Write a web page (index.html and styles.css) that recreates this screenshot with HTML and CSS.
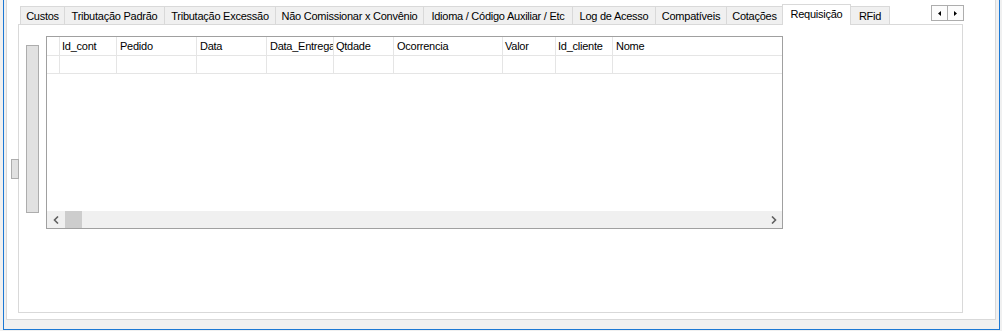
FILE: index.html
```html
<!DOCTYPE html>
<html>
<head>
<meta charset="utf-8">
<link rel="stylesheet" href="styles.css">
</head>
<body>
<div class="window">
  <div class="panel">
    <div class="tabctl">
      <div class="tabstrip">
        <div class="tab w-custos">Custos</div>
        <div class="tab w-tpad">Tributação Padrão</div>
        <div class="tab w-texc">Tributação Excessão</div>
        <div class="tab w-nao">Não Comissionar x Convênio</div>
        <div class="tab w-idi">Idioma / Código Auxiliar / Etc</div>
        <div class="tab w-log">Log de Acesso</div>
        <div class="tab w-comp">Compatíveis</div>
        <div class="tab w-cot">Cotações</div>
        <div class="tab sel w-req">Requisição</div>
        <div class="tab last w-rfid">RFid</div>
      </div>
      <div class="tabscroll">
        <div class="sbtn"><svg width="3" height="5" viewBox="0 0 3 5"><path d="M3 0L0 2.5L3 5Z" fill="#000"/></svg></div>
        <div class="sbtn"><svg width="3" height="5" viewBox="0 0 3 5"><path d="M0 0L3 2.5L0 5Z" fill="#000"/></svg></div>
      </div>
      <div class="page">
        <div class="sidebtn"></div>
        <div class="vbar"></div>
        <div class="grid">
          <div class="row head">
            <div class="cell c-sel"></div>
            <div class="cell c-id">Id_cont</div>
            <div class="cell c-ped">Pedido</div>
            <div class="cell c-data">Data</div>
            <div class="cell c-ent">Data_Entrega</div>
            <div class="cell c-qt">Qtdade</div>
            <div class="cell c-oc">Ocorrencia</div>
            <div class="cell c-val">Valor</div>
            <div class="cell c-cli">Id_cliente</div>
            <div class="cell c-nome">Nome</div>
          </div>
          <div class="row data">
            <div class="cell c-sel"></div>
            <div class="cell c-id"></div>
            <div class="cell c-ped"></div>
            <div class="cell c-data"></div>
            <div class="cell c-ent"></div>
            <div class="cell c-qt"></div>
            <div class="cell c-oc"></div>
            <div class="cell c-val"></div>
            <div class="cell c-cli"></div>
            <div class="cell c-nome"></div>
          </div>
          <div class="hscroll">
            <div class="arrow"><svg width="6" height="8" viewBox="0 0 6 8"><path d="M5 0.5L1.5 4L5 7.5" fill="none" stroke="#606060" stroke-width="1.6"/></svg></div>
            <div class="thumb"></div>
            <div class="track"></div>
            <div class="arrow"><svg width="6" height="8" viewBox="0 0 6 8"><path d="M1 0.5L4.5 4L1 7.5" fill="none" stroke="#606060" stroke-width="1.6"/></svg></div>
          </div>
        </div>
      </div>
    </div>
  </div>
</div>
</body>
</html>
```
FILE: styles.css
```css
* { box-sizing: border-box; }
html, body { margin: 0; padding: 0; }
body {
  background: #f0f0f0;
  width: 1002px;
  height: 331px;
  overflow: hidden;
  font-family: "Liberation Sans", Arial, sans-serif;
  font-size: 11px;
  letter-spacing: -0.25px;
  color: #000;
}
.window {
  margin-left: 3px;
  width: 997px;
  height: 330px;
  border: 1px solid #1c78d4;
  border-top: 0;
  padding-left: 2px;
}
.panel {
  width: 990px;
  height: 320px;
  background: #fff;
  border: 1px solid #d9d9d9;
  border-top: 0;
  padding: 4px 0 0 11px;
}
.tabctl {
  position: relative;
  width: 945px;
}
.tabstrip {
  display: flex;
  align-items: flex-end;
  height: 20px;
  padding-left: 2px;
}
.tab {
  height: 18px;
  background: #f0f0f0;
  border-top: 1px solid #d9d9d9;
  border-left: 1px solid #d9d9d9;
  display: flex;
  align-items: center;
  justify-content: center;
  padding-top: 1px;
  white-space: nowrap;
  overflow: hidden;
}
.tab.sel {
  height: 21px;
  margin-bottom: -1px;
  background: #fff;
  border-right: 1px solid #d9d9d9;
  position: relative;
  z-index: 1;
  padding-top: 0;
  padding-bottom: 3px;
}
.tab.last {
  border-left: 0;
  border-right: 1px solid #d9d9d9;
}
.w-custos { width: 44px; }
.w-tpad { width: 100px; }
.w-texc { width: 111px; }
.w-nao { width: 148px; }
.w-idi { width: 149px; }
.w-log { width: 83px; }
.w-comp { width: 71px; }
.w-cot { width: 56px; }
.w-req { width: 69px; }
.w-rfid { width: 39px; }

.tabscroll {
  position: absolute;
  left: 913px;
  top: 1px;
  display: flex;
  z-index: 2;
}
.sbtn {
  width: 17px;
  height: 16px;
  background: #fcfcfc;
  border: 1px solid #adadad;
  display: flex;
  align-items: center;
  justify-content: center;
}
.sbtn + .sbtn { margin-left: -1px; }

.page {
  position: relative;
  height: 289px;
  border: 1px solid #d9d9d9;
  background: #fff;
  display: flex;
  align-items: flex-start;
  gap: 7px;
  padding: 11px 0 0 7px;
}
.sidebtn {
  position: absolute;
  left: -8px;
  top: 134px;
  width: 8px;
  height: 20px;
  background: #e1e1e1;
  border: 1px solid #adadad;
  z-index: 1;
}
.vbar {
  width: 13px;
  height: 168px;
  margin-top: 9px;
  background: #e1e1e1;
  border: 1px solid #adadad;
}
.grid {
  width: 737px;
  height: 193px;
  border: 1px solid #a0a0a0;
  display: flex;
  flex-direction: column;
  background: #fff;
}
.row {
  display: flex;
  border-bottom: 1px solid #e5e5e5;
}
.row.head { height: 19px; }
.row.data { height: 18px; }
.cell {
  border-right: 1px solid #e5e5e5;
  padding: 2px 0 0 2px;
  white-space: nowrap;
  overflow: hidden;
  line-height: 15px;
}
.c-sel { width: 13px; }
.c-id { width: 57px; }
.c-ped { width: 80px; padding-left: 3px; }
.c-data { width: 70px; padding-left: 3px; }
.c-ent { width: 67px; padding-left: 3px; }
.c-qt { width: 60px; padding-left: 2px; }
.c-oc { width: 109px; padding-left: 3px; }
.c-val { width: 53px; padding-left: 2px; }
.c-cli { width: 57px; padding-left: 2px; }
.c-nome { flex: 1; border-right: 0; padding-left: 3px; }

.hscroll {
  margin-top: auto;
  height: 17px;
  background: #f0f0f0;
  display: flex;
  align-items: center;
}
.arrow {
  width: 17px;
  height: 17px;
  display: flex;
  align-items: center;
  justify-content: center;
}
.thumb {
  width: 17px;
  height: 17px;
  margin-left: 1px;
  background: #cdcdcd;
}
.track { flex: 1; }
```
